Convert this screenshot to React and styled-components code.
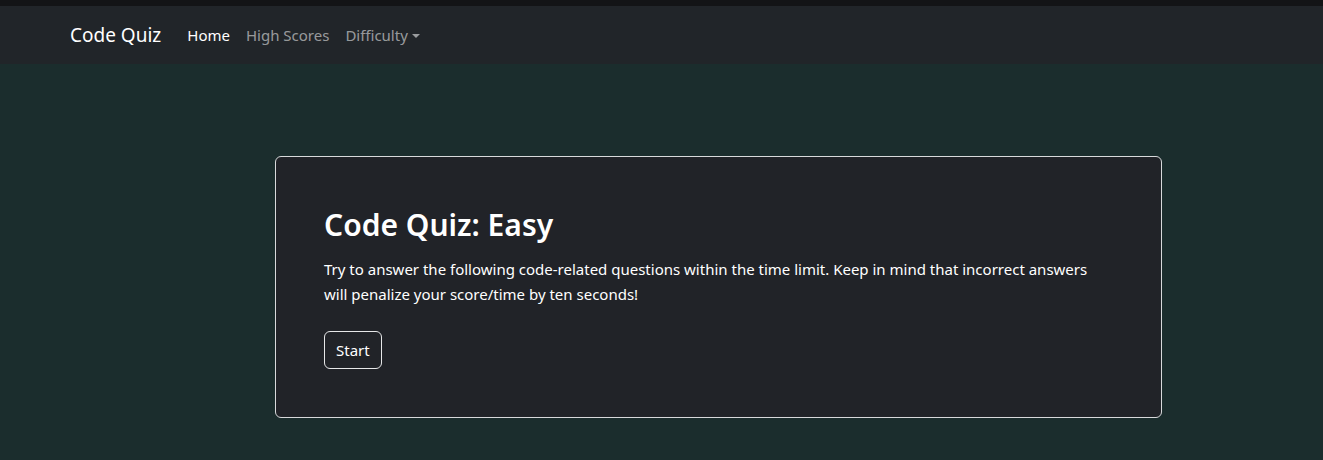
import React from 'react'
import styled, { createGlobalStyle } from 'styled-components'

const GlobalStyle = createGlobalStyle`
  * { box-sizing: border-box; }
  html, body { margin: 0; padding: 0; }
  body {
    background: #1b2d2d;
    font-family: "Noto Sans", "Open Sans", sans-serif;
    color: #fff;
    height: 460px;
    overflow: hidden;
  }
`

const TopStrip = styled.div`
  height: 6px;
  background: #131416;
`

const Navbar = styled.nav`
  height: 58px;
  background: #212529;
  display: flex;
  align-items: center;
  padding-left: 70px;
`

const Brand = styled.a`
  font-size: 19px;
  color: #fff;
  margin-right: 26px;
  text-decoration: none;
`

const NavLinks = styled.div`
  display: flex;
  gap: 16px;
`

const NavLink = styled.a`
  font-size: 15px;
  color: ${p => (p.$active ? '#fff' : 'rgba(255,255,255,0.55)')};
  text-decoration: none;
  display: flex;
  align-items: center;
`

const Caret = styled.span`
  display: inline-block;
  margin-left: 4px;
  border-top: 4px solid currentColor;
  border-left: 4px solid transparent;
  border-right: 4px solid transparent;
  margin-top: 2px;
`

const Main = styled.main`
  padding-top: 92px;
  padding-left: 275px;
`

const Card = styled.section`
  width: 887px;
  height: 262px;
  background: #212328;
  border: 1px solid #d8d9db;
  border-radius: 6px;
  padding: 48px;
`

const Title = styled.h2`
  margin: 2px 0 14px;
  font-size: 30px;
  font-weight: 600;
  line-height: 1.2;
`

const Text = styled.p`
  margin: 0 0 24px;
  font-size: 15px;
  line-height: 25px;
`

const Button = styled.button`
  font-family: inherit;
  font-size: 15px;
  color: #fff;
  background: transparent;
  border: 1px solid #e6e7e8;
  border-radius: 6px;
  height: 38px;
  padding: 0 11px;
`

export default function App() {
  return (
    <>
      <GlobalStyle />
      <TopStrip />
      <Navbar>
        <Brand href="#">Code Quiz</Brand>
        <NavLinks>
          <NavLink $active href="#">Home</NavLink>
          <NavLink href="#">High Scores</NavLink>
          <NavLink href="#">Difficulty<Caret /></NavLink>
        </NavLinks>
      </Navbar>
      <Main>
        <Card>
          <Title>Code Quiz: Easy</Title>
          <Text>
            Try to answer the following code-related questions within the time limit. Keep in mind that incorrect answers will penalize your score/time by ten seconds!
          </Text>
          <Button>Start</Button>
        </Card>
      </Main>
    </>
  )
}
